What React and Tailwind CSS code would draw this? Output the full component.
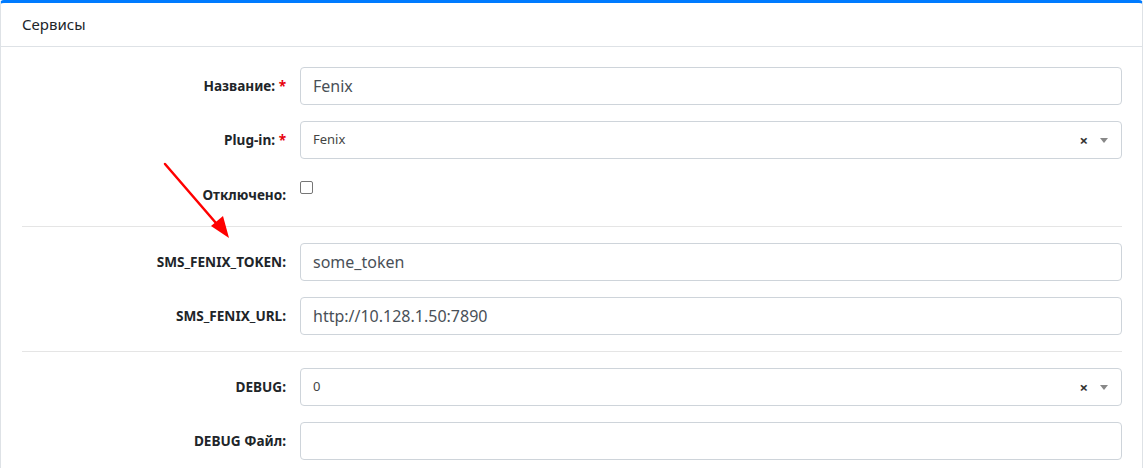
const font = { fontFamily: '"Segoe UI", "Noto Sans", "Open Sans", sans-serif' };

function Label({ children, required }) {
  return (
    <div className="w-[264px] shrink-0 text-right text-[13.6px] font-bold text-[#212529] leading-[38px]">
      {children}
      {required && <span className="text-red-600"> *</span>}
    </div>
  );
}

function TextRow({ label, value, required }) {
  return (
    <div className="flex gap-[14px] mb-4">
      <Label required={required}>{label}</Label>
      <div className="flex-1 h-[38px] border border-[#ced4da] rounded-[4px] px-3 flex items-center text-[16px] text-[#495057]">
        {value}
      </div>
    </div>
  );
}

function SelectRow({ label, value, required }) {
  return (
    <div className="flex gap-[14px] mb-4">
      <Label required={required}>{label}</Label>
      <div className="flex-1 h-[38px] border border-[#ced4da] rounded-[4px] pl-3 pr-[13px] flex items-center text-[13px] text-[#444]">
        <span className="flex-1">{value}</span>
        <span className="text-[15px] font-bold text-[#333] mr-[12px] leading-none">×</span>
        <span className="w-0 h-0 border-l-[4px] border-r-[4px] border-t-[5px] border-l-transparent border-r-transparent border-t-[#888]"></span>
      </div>
    </div>
  );
}

export default function App() {
  return (
    <div className="w-[1144px] h-[468px] bg-white overflow-hidden relative" style={font}>
      <div className="w-[1143px] border-l border-r border-[#dee2e6] border-t-[3px] border-t-[#007bff] rounded-t-[4px] min-h-[468px]">
        <div className="h-[44px] border-b border-[#dee2e6] px-[21px] flex items-center text-[15px] text-[#212529]">
          Сервисы
        </div>
        <div className="pl-[21px] pr-[20px] pt-5">
          <TextRow label="Название:" value="Fenix" required />
          <SelectRow label="Plug-in:" value="Fenix" required />
          <div className="flex gap-[14px] h-9">
            <div className="w-[264px] shrink-0 text-right text-[13.6px] font-bold text-[#212529] pt-[10px]">
              Отключено:
            </div>
            <div className="pt-[6px]">
              <div className="w-[13px] h-[13px] border border-[#767676] rounded-[2px]"></div>
            </div>
          </div>
          <hr className="mt-[15px] mb-4 border-t border-[#e5e5e5]" />
          <TextRow label="SMS_FENIX_TOKEN:" value="some_token" />
          <TextRow label="SMS_FENIX_URL:" value="http://10.128.1.50:7890" />
          <hr className="mb-4 border-t border-[#e5e5e5]" />
          <SelectRow label="DEBUG:" value="0" />
          <TextRow label="DEBUG Файл:" value="" />
        </div>
      </div>
      <svg className="absolute left-0 top-0 pointer-events-none" width="1144" height="468">
        <line x1="165" y1="164" x2="222" y2="230" stroke="#ff0000" strokeWidth="2.5" strokeLinecap="round" />
        <polygon points="229,238 211,226 223,216" fill="#ff0000" />
      </svg>
    </div>
  );
}
